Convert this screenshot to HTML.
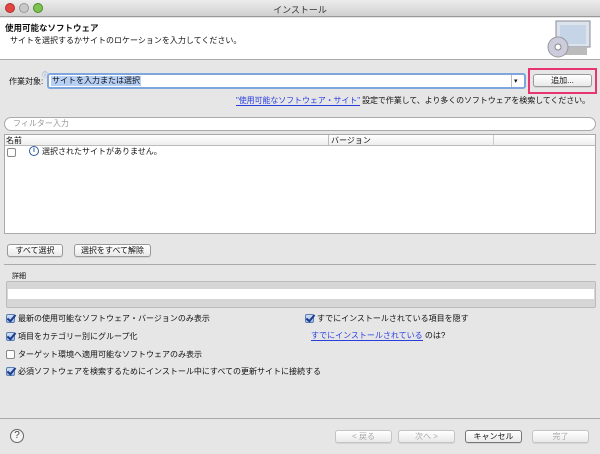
<!DOCTYPE html>
<html><head><meta charset="utf-8"><style>
*{box-sizing:border-box;margin:0;padding:0}
body{width:600px;height:454px;overflow:hidden;background:#e6e6e6;font-family:"Liberation Sans","Noto Sans CJK JP",sans-serif;font-size:8px;color:#111;position:relative}
.a{position:absolute;white-space:nowrap}
.btn{position:absolute;height:13px;border:1px solid #999;border-radius:3px;background:linear-gradient(#fff,#e9e9e9);font-size:8px;text-align:center;line-height:11px;box-shadow:0 1px 0 rgba(0,0,0,.08)}
.dis{color:#aaa;border-color:#c4c4c4}
.cb{position:absolute;width:9px;height:9px;border:1px solid #888;border-radius:2px;background:#fff}
.cb.on::after{content:"";position:absolute;left:2px;top:-2px;width:3px;height:7px;border:solid #1e3a8a;border-width:0 2px 2px 0;transform:rotate(40deg)}
.cb.on{background:linear-gradient(#cfe0f7,#9ebee9);border-color:#5b7fb3}
</style></head><body>
<div class="a" style="left:0;top:0;width:600px;height:17px;background:linear-gradient(#ececec,#d0d0d0);border-bottom:1px solid #999"></div>
<div class="a" style="left:5px;top:3px;width:10px;height:10px;border-radius:50%;background:#e2463e;border:1px solid #a33"></div>
<div class="a" style="left:19px;top:3px;width:10px;height:10px;border-radius:50%;background:#c8c8c8;border:1px solid #999"></div>
<div class="a" style="left:33px;top:3px;width:10px;height:10px;border-radius:50%;background:#7ec24f;border:1px solid #4a8a2a"></div>
<div class="a" style="left:0;width:600px;top:3px;text-align:center;font-size:9px;color:#333">インストール</div>
<div class="a" style="left:0;top:18px;width:600px;height:42px;background:#fff;border-bottom:1px solid #aaa"></div>
<div class="a" style="left:5px;top:22px;font-weight:bold;font-size:8.5px">使用可能なソフトウェア</div>
<div class="a" style="left:10px;top:35px">サイトを選択するかサイトのロケーションを入力してください。</div>
<svg class="a" style="left:543px;top:18px" width="55" height="42"><rect x="13" y="3" width="34" height="26" fill="#dde3ea" stroke="#889" /><rect x="17" y="7" width="26" height="19" fill="#c5d4e6"/><rect x="20" y="29" width="24" height="8" fill="#bbb"/><circle cx="15" cy="29" r="10" fill="#ccd" stroke="#999"/><circle cx="15" cy="29" r="3" fill="#fff" stroke="#888"/></svg>
<div class="a" style="left:9px;top:76px">作業対象:</div>
<div class="a" style="left:42px;top:70px;font-size:6px;color:#36c">ⓘ</div>
<div class="a" style="left:47px;top:73px;width:479px;height:16px;border:2px solid #7ea6dd;border-radius:3px;background:#fff"></div>
<div class="a" style="left:51px;top:76px;background:#b5cff5;padding:0 1px;line-height:10px">サイトを入力または選択</div>
<div class="a" style="left:511px;top:75px;width:1px;height:12px;background:#bbb"></div>
<div class="a" style="left:514px;top:77px;font-size:7px">▾</div>
<div class="a" style="left:528px;top:68px;width:69px;height:26px;border:2px solid #e8356f"></div>
<div class="btn" style="left:533px;top:74px;width:59px">追加...</div>
<div class="a" style="left:236px;top:95px;letter-spacing:-0.1px"><span style="color:#2a3ee0;border-bottom:1px solid #2a3ee0">"使用可能なソフトウェア・サイト"</span> 設定で作業して、より多くのソフトウェアを検索してください。</div>
<div class="a" style="left:4px;top:117px;width:592px;height:14px;border:1px solid #aaa;border-radius:7px;background:#fff;color:#999;padding-left:8px;line-height:12px">フィルター入力</div>
<div class="a" style="left:4px;top:134px;width:592px;height:100px;border:1px solid #aaa;background:#fff"></div>
<div class="a" style="left:5px;top:135px;width:590px;height:11px;border-bottom:1px solid #bbb;background:linear-gradient(#fff,#eee)"></div>
<div class="a" style="left:328px;top:135px;width:1px;height:11px;background:#bbb"></div>
<div class="a" style="left:493px;top:135px;width:1px;height:11px;background:#ccc"></div>
<div class="a" style="left:6px;top:135px;line-height:11px">名前</div>
<div class="a" style="left:331px;top:135px;line-height:11px">バージョン</div>
<div class="cb" style="left:7px;top:148px"></div>
<div class="a" style="left:29px;top:146px;width:10px;height:10px;border:1px solid #2b5aa0;border-radius:50%;color:#2b5aa0;font-size:7px;text-align:center;line-height:8px;font-weight:bold">i</div>
<div class="a" style="left:42px;top:146px">選択されたサイトがありません。</div>
<div class="btn" style="left:7px;top:244px;width:56px">すべて選択</div>
<div class="btn" style="left:74px;top:244px;width:77px">選択をすべて解除</div>
<div class="a" style="left:4px;top:264px;width:592px;height:1px;background:#aaa"></div>
<div class="a" style="left:12px;top:271px;font-size:7px">詳細</div>
<div class="a" style="left:6px;top:281px;width:590px;height:27px;border:1px solid #bbb;background:#d6d6d6;border-radius:2px"></div>
<div class="a" style="left:8px;top:289px;width:586px;height:10px;background:#fff"></div>
<div class="cb on" style="left:6px;top:314px"></div><div class="a" style="left:18px;top:313px">最新の使用可能なソフトウェア・バージョンのみ表示</div>
<div class="cb on" style="left:6px;top:332px"></div><div class="a" style="left:18px;top:331px">項目をカテゴリー別にグループ化</div>
<div class="cb" style="left:6px;top:350px"></div><div class="a" style="left:18px;top:349px">ターゲット環境へ適用可能なソフトウェアのみ表示</div>
<div class="cb on" style="left:6px;top:367px"></div><div class="a" style="left:18px;top:366px">必須ソフトウェアを検索するためにインストール中にすべての更新サイトに接続する</div>
<div class="cb on" style="left:305px;top:314px"></div><div class="a" style="left:317px;top:313px">すでにインストールされている項目を隠す</div>
<div class="a" style="left:311px;top:330px"><span style="color:#2a3ee0;border-bottom:1px solid #2a3ee0">すでにインストールされている</span> のは?</div>
<div class="a" style="left:0;top:418px;width:600px;height:1px;background:#aaa"></div>
<div class="a" style="left:10px;top:429px;width:14px;height:14px;border:1px solid #666;border-radius:50%;text-align:center;line-height:12px;font-size:10px;color:#444;background:#f4f4f4">?</div>
<div class="btn dis" style="left:335px;top:430px;width:57px">&lt; 戻る</div>
<div class="btn dis" style="left:398px;top:430px;width:57px">次へ &gt;</div>
<div class="btn" style="left:465px;top:430px;width:57px;border-color:#777">キャンセル</div>
<div class="btn dis" style="left:532px;top:430px;width:57px">完了</div>
</body></html>
